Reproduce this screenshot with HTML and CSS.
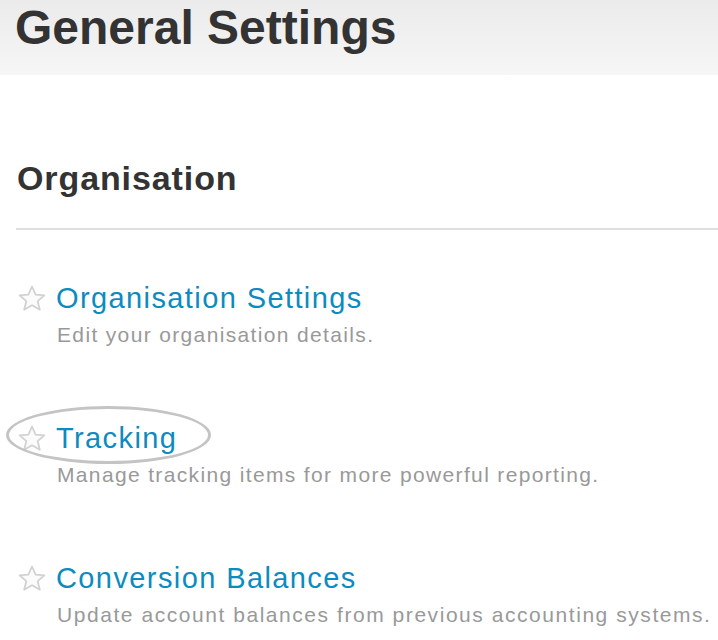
FILE: index.html
```html
<!DOCTYPE html>
<html>
<head>
<meta charset="utf-8">
<link rel="stylesheet" href="styles.css">
</head>
<body>
<header class="page-header">
  <h1 class="page-title">General Settings</h1>
</header>
<main class="content">
  <h2 class="section-title">Organisation</h2>
  <ul class="settings-list">
    <li class="setting">
      <div class="setting-head">
        <svg class="star" viewBox="0 0 28 27" width="28" height="27"><path d="M14 1.5 L17.6 9.6 L26.4 10.3 L19.7 16.1 L21.8 24.8 L14 20.2 L6.2 24.8 L8.3 16.1 L1.6 10.3 L10.4 9.6 Z" fill="#fbfbfb" stroke="#d2d2d2" stroke-width="1.8" stroke-linejoin="round"/></svg>
        <a class="setting-link" href="#">Organisation Settings</a>
      </div>
      <p class="setting-desc">Edit your organisation details.</p>
    </li>
    <li class="setting">
      <div class="setting-head highlighted">
        <svg class="star" viewBox="0 0 28 27" width="28" height="27"><path d="M14 1.5 L17.6 9.6 L26.4 10.3 L19.7 16.1 L21.8 24.8 L14 20.2 L6.2 24.8 L8.3 16.1 L1.6 10.3 L10.4 9.6 Z" fill="#fbfbfb" stroke="#d2d2d2" stroke-width="1.8" stroke-linejoin="round"/></svg>
        <a class="setting-link" href="#">Tracking</a>
        <span class="ring"></span>
      </div>
      <p class="setting-desc">Manage tracking items for more powerful reporting.</p>
    </li>
    <li class="setting">
      <div class="setting-head">
        <svg class="star" viewBox="0 0 28 27" width="28" height="27"><path d="M14 1.5 L17.6 9.6 L26.4 10.3 L19.7 16.1 L21.8 24.8 L14 20.2 L6.2 24.8 L8.3 16.1 L1.6 10.3 L10.4 9.6 Z" fill="#fbfbfb" stroke="#d2d2d2" stroke-width="1.8" stroke-linejoin="round"/></svg>
        <a class="setting-link" href="#">Conversion Balances</a>
      </div>
      <p class="setting-desc wide">Update account balances from previous accounting systems.</p>
    </li>
  </ul>
</main>
</body>
</html>
```
FILE: styles.css
```css
html, body {
  margin: 0;
  padding: 0;
  background: #fff;
  font-family: "Liberation Sans", Arial, Helvetica, sans-serif;
  overflow: hidden;
}
.page-header {
  height: 75px;
  background: linear-gradient(#ebebeb, #f6f6f6);
  padding: 0 0 0 15px;
  box-sizing: border-box;
}
.page-title {
  margin: 0;
  font-size: 48px;
  font-weight: bold;
  color: #333;
  line-height: 56px;
}
.content {
  padding: 0 0 0 16px;
}
.section-title {
  margin: 0;
  padding-top: 83px;
  padding-left: 1px;
  font-size: 34px;
  font-weight: bold;
  color: #333;
  line-height: 40px;
  letter-spacing: 0.9px;
  padding-bottom: 30px;
  border-bottom: 2px solid #dedede;
}
.settings-list {
  list-style: none;
  margin: 0;
  padding: 0;
}
.setting {
  margin: 0;
  padding: 0;
  height: 140px;
}
.setting:first-child {
  margin-top: 50px;
}
.setting:last-child {
  height: auto;
}
.setting-head {
  position: relative;
  display: flex;
  align-items: center;
  gap: 10px;
  height: 36px;
}
.star {
  display: block;
  margin-left: 2px;
  flex: none;
}
.setting-link {
  font-size: 29px;
  color: #0c8bbf;
  text-decoration: none;
  line-height: 36px;
  letter-spacing: 1.4px;
}
.setting-desc {
  margin: 7px 0 0 41px;
  font-size: 21px;
  color: #999;
  line-height: 24px;
  letter-spacing: 1.35px;
  white-space: nowrap;
}
.setting-desc.wide {
  letter-spacing: 1.55px;
}
.ring {
  position: absolute;
  left: -10px;
  top: -14px;
  width: 199px;
  height: 52px;
  border: 3px solid #c4c4c4;
  border-radius: 50%;
}
```
